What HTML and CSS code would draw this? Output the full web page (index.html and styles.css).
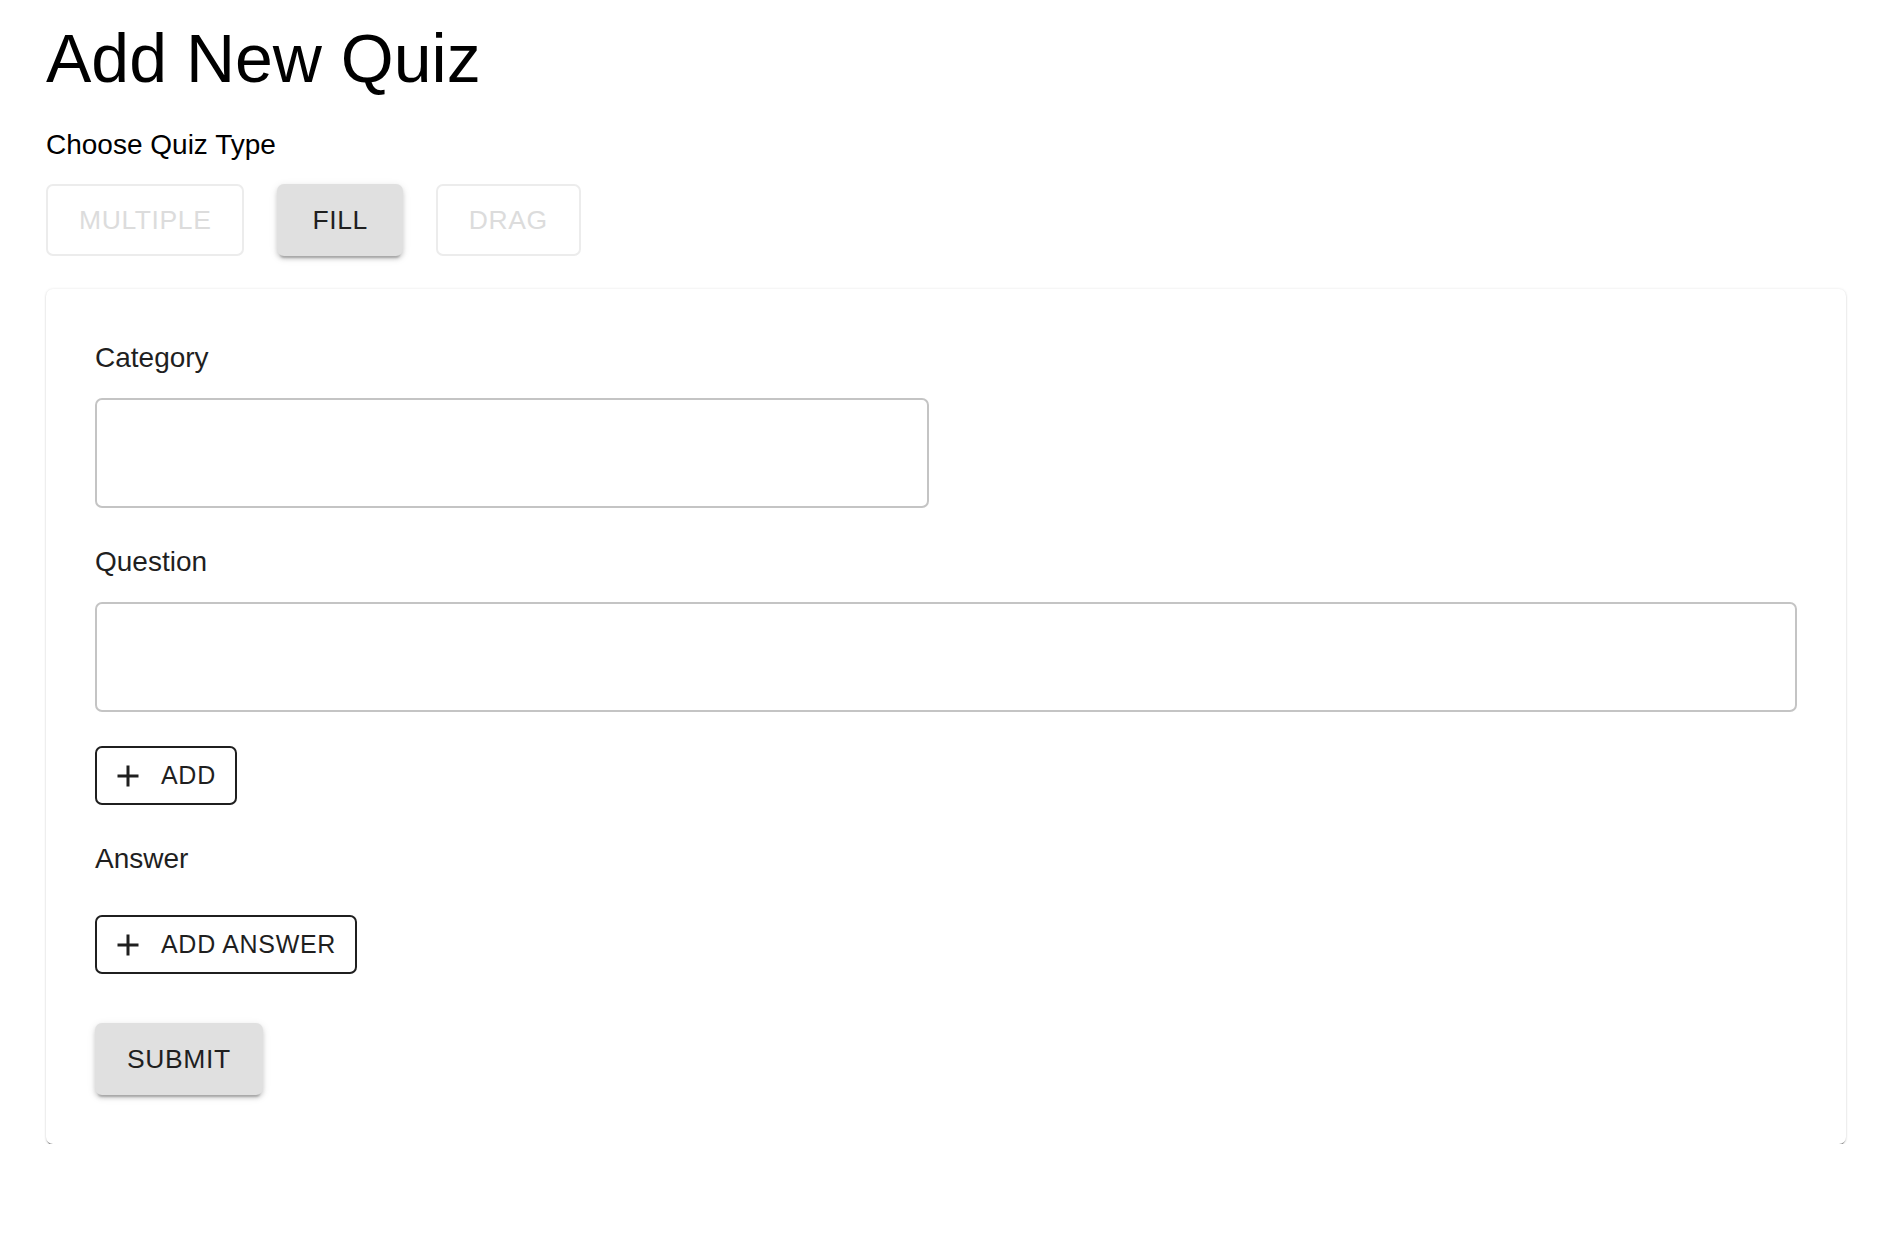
FILE: index.html
```html
<!DOCTYPE html>
<html lang="en">
<head>
<meta charset="utf-8">
<title>Add New Quiz</title>
<link rel="stylesheet" href="styles.css">
</head>
<body>
<main class="page">
  <h1 class="title">Add New Quiz</h1>
  <p class="subtitle">Choose Quiz Type</p>
  <div class="type-row">
    <button class="btn btn-outline-disabled" disabled>MULTIPLE</button>
    <button class="btn btn-contained btn-fill">FILL</button>
    <button class="btn btn-outline-disabled" disabled>DRAG</button>
  </div>
  <section class="card">
    <label class="field-label">Category</label>
    <input class="field-input field-short" type="text">
    <label class="field-label field-gap">Question</label>
    <input class="field-input" type="text">
    <div class="row-gap">
      <button class="btn-outline"><svg class="plus" viewBox="0 0 24 24"><path d="M19 13h-6v6h-2v-6H5v-2h6V5h2v6h6v2z"/></svg>ADD</button>
    </div>
    <label class="field-label field-gap">Answer</label>
    <div class="answer-gap">
      <button class="btn-outline"><svg class="plus" viewBox="0 0 24 24"><path d="M19 13h-6v6h-2v-6H5v-2h6V5h2v6h6v2z"/></svg>ADD ANSWER</button>
    </div>
    <div class="submit-gap">
      <button class="btn btn-contained btn-submit">SUBMIT</button>
    </div>
  </section>
</main>
</body>
</html>
```
FILE: styles.css
```css
* { box-sizing: border-box; }
html, body { margin: 0; padding: 0; background: #fff; }
body {
  font-family: "Liberation Sans", Arial, Helvetica, sans-serif;
  color: #000;
}
.page {
  padding: 18px 58px 0 46px;
}
.title {
  margin: 0;
  font-size: 68px;
  font-weight: 400;
  line-height: 80px;
  color: #000;
}
.subtitle {
  margin: 27px 0 0;
  font-size: 28px;
  line-height: 40px;
  color: #000;
}
.type-row {
  display: flex;
  gap: 33px;
  margin-top: 19px;
}
.btn {
  height: 72px;
  font-family: inherit;
  font-size: 26.5px;
  letter-spacing: 0.6px;
  border-radius: 7px;
  display: inline-flex;
  align-items: center;
  justify-content: center;
  cursor: pointer;
}
.btn-outline-disabled {
  background: #fff;
  border: 2px solid #ececec;
  color: #dcdcdc;
  padding: 0 31px;
}
.btn-contained {
  background: #e0e0e0;
  border: none;
  color: #1f1f1f;
  box-shadow: 0 5px 2px -3px rgba(0,0,0,0.2), 0 3px 4px 0 rgba(0,0,0,0.14), 0 2px 8px 0 rgba(0,0,0,0.10);
}
.btn-fill { padding: 0 35px; }
.btn-submit { padding: 0 32px; }
.card {
  margin-top: 33px;
  background: #fff;
  border-radius: 7px;
  padding: 49px;
  box-shadow: 0 2px 1px -1px rgba(0,0,0,0.45), 0 1px 2px 0 rgba(0,0,0,0.14), 0 0 3px 0 rgba(0,0,0,0.09);
  display: flex;
  flex-direction: column;
  align-items: flex-start;
}
.field-label {
  display: block;
  font-size: 28px;
  line-height: 40px;
  color: #1f1f1f;
}
.field-gap { margin-top: 34px; }
.field-input {
  display: block;
  margin-top: 20px;
  width: 100%;
  height: 110px;
  border: 2px solid #c4c4c4;
  border-radius: 7px;
  background: #fff;
  outline: none;
  font-family: inherit;
  font-size: 28px;
  padding: 0 24px;
}
.field-short { width: 834px; }
.row-gap { margin-top: 34px; }
.answer-gap { margin-top: 36px; }
.submit-gap { margin-top: 49px; }
.btn-outline {
  height: 59px;
  display: inline-flex;
  align-items: center;
  background: #fff;
  border: 2px solid #1f1f1f;
  border-radius: 7px;
  color: #1f1f1f;
  font-family: inherit;
  font-size: 25px;
  letter-spacing: 0.7px;
  padding: 0 19px 0 13px;
  cursor: pointer;
}
.plus {
  width: 36px;
  height: 36px;
  margin-right: 15px;
  fill: #1f1f1f;
}
```
